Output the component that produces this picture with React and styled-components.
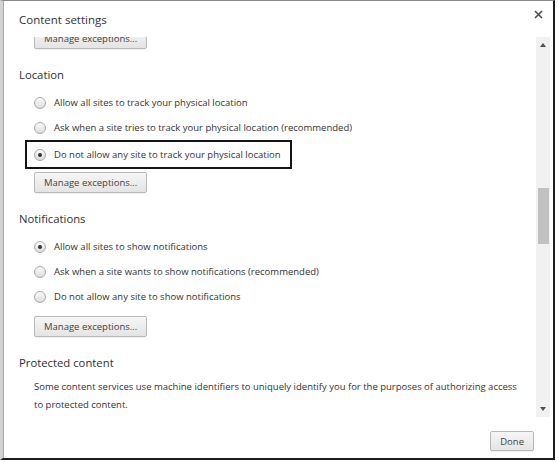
import React from "react"
import styled, { createGlobalStyle } from "styled-components"

const GlobalStyle = createGlobalStyle`
  html, body {
    margin: 0;
    padding: 0;
    background: #fff;
  }
  body {
    font-family: "Open Sans", "Noto Sans", sans-serif;
    color: #333;
  }
`

const Dialog = styled.div`
  box-sizing: border-box;
  width: 555px;
  height: 460px;
  display: flex;
  flex-direction: column;
  background: #fff;
  border-top: 1px solid #8a8a8a;
  border-left: 3px solid #d2d2d2;
  border-right: 2px solid #1c1c1c;
  border-bottom: 2px solid #1c1c1c;
  box-shadow: inset 1px 0 0 #a9a9a9;
`

const Header = styled.div`
  height: 36px;
  flex: none;
  display: flex;
  justify-content: space-between;
  align-items: flex-start;
  padding: 10px 10px 0 16px;
  box-sizing: border-box;
`

const Title = styled.div`
  font-size: 11.5px;
  line-height: 18px;
  color: #333;
`

const CloseButton = styled.button`
  border: 0;
  padding: 0;
  margin-top: -1px;
  background: none;
  width: 9px;
  height: 9px;
  display: flex;
`

const Body = styled.div`
  flex: none;
  height: 380px;
  display: flex;
`

const Content = styled.div`
  flex: 1;
  overflow: hidden;
  padding-left: 16px;
`

const SectionTitle = styled.div`
  height: 18px;
  line-height: 18px;
  font-size: 11.3px;
  color: #303030;
  margin: 17px 0 6px;
`

const OptionList = styled.div`
  display: flex;
  flex-direction: column;
  align-items: flex-start;
`

const OptionRow = styled.label`
  display: flex;
  align-items: center;
  gap: 8px;
  height: 25px;
  margin-left: 8px;
  padding: 0 9px 0 7px;
  font-size: 9.5px;
  color: #333;
  outline: ${(p) => (p.$focused ? "2px solid #151515" : "none")};
  margin-top: ${(p) => (p.$focused ? "2px" : "0")};
  margin-bottom: ${(p) => (p.$focused ? "-2px" : "0")};
`

const Radio = styled.span`
  box-sizing: border-box;
  width: 12px;
  height: 12px;
  border-radius: 50%;
  border: 1px solid #a9a9a9;
  background: linear-gradient(#fbfbfb, #dcdcdc);
  display: flex;
  align-items: center;
  justify-content: center;
  flex: none;

  &::after {
    content: "";
    width: 4px;
    height: 4px;
    border-radius: 50%;
    background: ${(p) => (p.$checked ? "#333" : "transparent")};
  }
`

const Button = styled.button`
  font-family: "Open Sans", "Noto Sans", sans-serif;
  font-size: 9.5px;
  color: #444;
  height: ${(p) => p.$height || "21px"};
  padding: 0 9px;
  margin-left: ${(p) => p.$indent || "0"};
  margin-top: ${(p) => p.$top || "0"};
  border: 1px solid #b9b9b9;
  border-radius: 2px;
  background: linear-gradient(#f6f6f6, #e4e4e4);
  box-shadow: 0 1px 0 rgba(0, 0, 0, 0.06);
  display: block;
`

const Paragraph = styled.p`
  margin: 6px 0 0 15px;
  max-width: 490px;
  font-size: 9.5px;
  line-height: 18px;
  color: #333;
`

const Scrollbar = styled.div`
  width: 14px;
  margin-right: 3px;
  background: #f1f1f1;
  display: flex;
  flex-direction: column;
`

const ScrollArrow = styled.div`
  height: 16px;
  flex: none;
  display: flex;
  align-items: center;
  justify-content: center;

  &::before {
    content: "";
    width: 0;
    height: 0;
    border-left: 3px solid transparent;
    border-right: 3px solid transparent;
    ${(p) =>
      p.$down
        ? "border-top: 4px solid #505050;"
        : "border-bottom: 4px solid #505050;"}
  }
`

const Track = styled.div`
  flex: 1;
`

const Thumb = styled.div`
  height: 56px;
  margin: 0 1px 0 2px;
  background: #c1c1c1;
`

const Footer = styled.div`
  flex: 1;
  display: flex;
  justify-content: flex-end;
  align-items: flex-start;
  padding: 14px 19px 0 0;
`

const locationOptions = [
  { label: "Allow all sites to track your physical location" },
  { label: "Ask when a site tries to track your physical location (recommended)" },
  { label: "Do not allow any site to track your physical location", checked: true, focused: true },
]

const notificationOptions = [
  { label: "Allow all sites to show notifications", checked: true },
  { label: "Ask when a site wants to show notifications (recommended)" },
  { label: "Do not allow any site to show notifications" },
]

const Options = ({ items }) => (
  <OptionList>
    {items.map((o) => (
      <OptionRow key={o.label} $focused={o.focused}>
        <Radio $checked={o.checked} />
        {o.label}
      </OptionRow>
    ))}
  </OptionList>
)

const App = () => {
  // scroll position of the settings list, drawn as a plain thumb
  const thumbOffset = 135

  return (
    <>
      <GlobalStyle />
      <Dialog>
        <Header>
          <Title>Content settings</Title>
          <CloseButton aria-label="Close">
            <svg width="9" height="9" viewBox="0 0 9 9">
              <path d="M1 1L8 8M8 1L1 8" stroke="#4a4a4a" strokeWidth="1.6" />
            </svg>
          </CloseButton>
        </Header>
        <Body>
          <Content>
            <Button $indent="15px" $top="-9px">Manage exceptions...</Button>

            <SectionTitle>Location</SectionTitle>
            <Options items={locationOptions} />
            <Button $indent="15px" $top="7px">Manage exceptions...</Button>

            <SectionTitle>Notifications</SectionTitle>
            <Options items={notificationOptions} />
            <Button $indent="15px" $top="7px">Manage exceptions...</Button>

            <SectionTitle>Protected content</SectionTitle>
            <Paragraph>
              Some content services use machine identifiers to uniquely identify you for the purposes of
              authorizing access to protected content.
            </Paragraph>
          </Content>
          <Scrollbar>
            <ScrollArrow />
            <Track>
              <Thumb style={{ marginTop: thumbOffset }} />
            </Track>
            <ScrollArrow $down />
          </Scrollbar>
        </Body>
        <Footer>
          <Button $height="20px">Done</Button>
        </Footer>
      </Dialog>
    </>
  )
}

export default App
